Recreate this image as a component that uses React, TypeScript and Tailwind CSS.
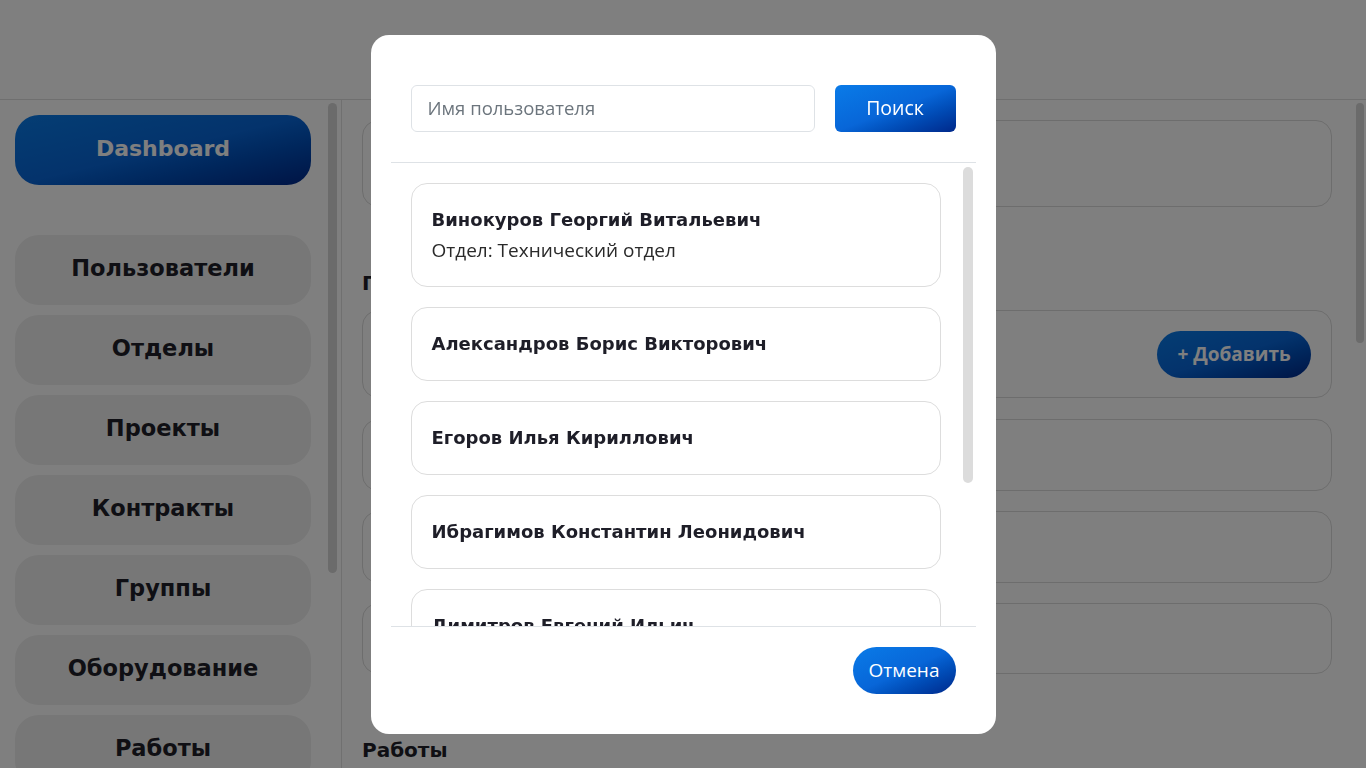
import React from "react";

const wide = { fontFamily: '"DejaVu Sans", "Noto Sans", sans-serif' };
const soft = { fontFamily: '"Open Sans", "Noto Sans", sans-serif' };

const navItems = ["Пользователи", "Отделы", "Проекты", "Контракты", "Группы", "Оборудование", "Работы"];

const users = [
  { name: "Винокуров Георгий Витальевич", dept: "Отдел: Технический отдел" },
  { name: "Александров Борис Викторович" },
  { name: "Егоров Илья Кириллович" },
  { name: "Ибрагимов Константин Леонидович" },
  { name: "Димитров Евгений Ильич" },
  { name: "Смирнов Андрей Павлович" },
];

export default function App() {
  return (
    <div className="relative h-[768px] w-[1366px] overflow-hidden bg-white">
      {/* header */}
      <div className="h-[100px] border-b border-[#dedede] bg-white" />
      <div className="flex h-[668px]">
        {/* sidebar */}
        <div className="flex w-[342px] shrink-0 overflow-hidden border-r border-[#e0e0e0]">
          <div className="flex w-[326px] flex-col pl-[15px] pt-[15px]">
            <div
              className="flex h-[70px] w-[296px] shrink-0 items-center justify-center rounded-[24px] bg-linear-to-br from-[#0a7be8] via-[#0866d8] to-[#00288a] pb-[3px] text-[22px] font-bold text-white"
              style={wide}
            >
              Dashboard
            </div>
            <div className="mt-[50px] flex flex-col gap-[10px]">
              {navItems.map((n) => (
                <div
                  key={n}
                  className="flex h-[70px] w-[296px] shrink-0 items-center justify-center rounded-[24px] bg-[#eeeeee] pb-[2px] text-[22.5px] font-bold text-[#1e1e28]"
                  style={wide}
                >
                  {n}
                </div>
              ))}
            </div>
          </div>
          <div className="pt-[3px]">
            <div className="ml-[2px] h-[470px] w-[9px] rounded-full bg-[#d6d6d6]" />
          </div>
        </div>
        {/* main */}
        <div className="flex flex-1 overflow-hidden">
          <div className="flex w-[990px] flex-col pl-[20px] pt-[20px]">
            <div className="h-[87px] w-[970px] shrink-0 rounded-[16px] border border-[#dadada]" />
            <div className="mt-[64px] h-[24px] text-[20px] font-bold leading-[24px] text-[#1e1e28]" style={wide}>
              Пользователи
            </div>
            <div className="mt-[15px] flex h-[88px] w-[970px] shrink-0 items-center justify-end rounded-[16px] border border-[#dadada] pr-[20px]">
              <div
                className="flex h-[47px] w-[154px] items-center justify-center rounded-full bg-linear-to-br from-[#0a7be8] via-[#0866d8] to-[#00288a] text-[19px] font-bold text-white"
                style={soft}
              >
                + Добавить
              </div>
            </div>
            <div className="mt-[21px] h-[72px] w-[970px] shrink-0 rounded-[16px] border border-[#dadada]" />
            <div className="mt-[20px] h-[72px] w-[970px] shrink-0 rounded-[16px] border border-[#dadada]" />
            <div className="mt-[20px] h-[71px] w-[970px] shrink-0 rounded-[16px] border border-[#dadada]" />
            <div className="mt-[64px] h-[24px] text-[20px] font-bold leading-[24px] text-[#1e1e28]" style={wide}>
              Работы
            </div>
          </div>
          <div className="flex flex-1 justify-end pr-[2px] pt-[3px]">
            <div className="h-[240px] w-[8px] rounded-full bg-[#d6d6d6]" />
          </div>
        </div>
      </div>

      {/* overlay + modal */}
      <div className="fixed inset-0 flex items-center justify-center bg-black/50">
        <div className="flex h-[699px] w-[625px] flex-col overflow-hidden rounded-[18px] bg-white px-[20px]">
          <div className="flex shrink-0 gap-[20px] border-b border-[#dee2e6] px-[20px] pb-[30px] pt-[50px]">
            <div
              className="flex h-[47px] w-[404px] items-center rounded-[6px] border border-[#dee2e6] px-[16px] text-[18.5px] text-[#6c757d]"
              style={soft}
            >
              Имя пользователя
            </div>
            <div
              className="flex h-[47px] w-[121px] items-center justify-center rounded-[6px] bg-linear-to-br from-[#0a7be8] via-[#0866d8] to-[#00288a] text-[19.5px] text-white"
              style={soft}
            >
              Поиск
            </div>
          </div>
          <div className="flex h-[463px] shrink-0 overflow-hidden">
            <div className="flex w-[550px] flex-col gap-[20px] pl-[20px] pt-[20px]">
              {users.map((u) => (
                <div
                  key={u.name}
                  className="flex w-[530px] shrink-0 flex-col gap-[6px] rounded-[16px] border border-[#dddddd] px-[20px] py-[24px]"
                >
                  <div className="text-[18px] font-bold leading-[24px] text-[#1e1e28]" style={wide}>
                    {u.name}
                  </div>
                  {u.dept && (
                    <div className="text-[19px] leading-[24px] text-[#2a2a2a]" style={soft}>
                      {u.dept}
                    </div>
                  )}
                </div>
              ))}
            </div>
            <div className="flex flex-1 justify-end pr-[3px] pt-[4px]">
              <div className="h-[316px] w-[10px] rounded-full bg-[#dcdcdc]" />
            </div>
          </div>
          <div className="flex shrink-0 justify-end border-t border-[#dee2e6] pb-[40px] pr-[20px] pt-[20px]">
            <div
              className="flex h-[47px] w-[103px] items-center justify-center rounded-full bg-linear-to-br from-[#0a7be8] via-[#0866d8] to-[#00288a] text-[19px] text-white"
              style={soft}
            >
              Отмена
            </div>
          </div>
        </div>
      </div>
    </div>
  );
}
